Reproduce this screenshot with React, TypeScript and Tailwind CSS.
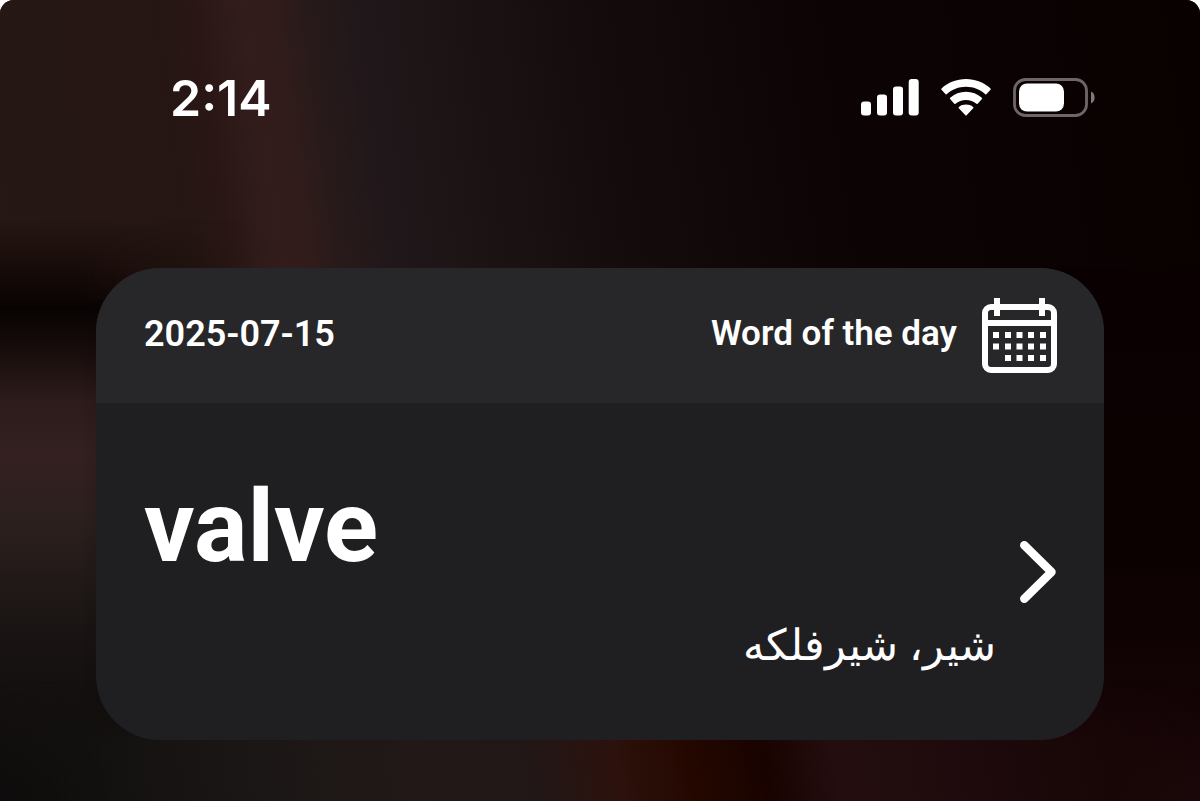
function SignalIcon() {
  return (
    <svg viewBox="0 0 58 38" className="h-[38px] w-[58px]" fill="currentColor" role="img" aria-label="Signal">
      <rect x="0" y="22.5" width="10" height="14" rx="3" />
      <rect x="16" y="15.5" width="10" height="21" rx="3" />
      <rect x="32" y="7.5" width="10" height="29" rx="3" />
      <rect x="47.7" y="0" width="10" height="36.5" rx="3" />
    </svg>
  );
}

function WifiIcon() {
  return (
    <svg viewBox="0 0 50 38" className="h-[38px] w-[50px]" fill="currentColor" role="img" aria-label="Wi-Fi">
      <path d="M25 0C15.700 0 7 3.500.5 9.500c-.4.400-.4.900 0 1.300l3.900 4.300c.4.400.9.400 1.300.1C10.900 10.500 17.700 7.800 25 7.800s14.100 2.700 19.300 7.400c.4.3.9.300 1.300-.1l3.900-4.300c.4-.4.400-.9 0-1.300C43 3.500 34.300 0 25 0Z" />
      <path d="M25 12.700c-6 0-11.500 2.200-15.800 6-.4.400-.4.900-.1 1.300l4.200 4.700c.3.400.8.400 1.200.1 2.900-2.500 6.500-3.900 10.500-3.900s7.600 1.400 10.500 3.900c.4.3.9.300 1.200-.1l4.200-4.700c.3-.4.300-.9-.1-1.300-4.300-3.800-9.800-6-15.800-6Z" />
      <path d="M25 25.600c-2.700 0-5.100.8-7.100 2.400-.4.300-.5.900-.1 1.300l6.600 7c.3.400.9.400 1.200 0l6.600-7c.4-.4.300-1-.1-1.300-2-1.600-4.400-2.400-7.100-2.400Z" />
    </svg>
  );
}

function BatteryIcon() {
  return (
    <svg viewBox="0 0 82 40" className="h-10 w-[82px]" role="img" aria-label="Battery">
      <rect x="1.500" y="1.500" width="72" height="36" rx="11" fill="none" stroke="#6f6767" strokeWidth="2.800" />
      <rect x="6" y="5.500" width="45" height="28" rx="8" fill="currentColor" />
      <path d="M78 13.500c2.400 1 3.600 3.300 3.600 6s-1.200 5-3.600 6Z" fill="#7f7878" />
    </svg>
  );
}

const calendarDots = [
  [11, 34], [23, 34], [34.5, 34], [46, 34], [58, 34],
  [11, 45.5], [23, 45.5], [34.5, 45.5], [46, 45.5], [58, 45.5],
  [23, 57], [34.5, 57], [46, 57], [58, 57],
];

function CalendarIcon() {
  return (
    <svg viewBox="0 0 75 75" className="size-[75px]" fill="currentColor" aria-hidden="true">
      <rect x="3" y="9" width="69" height="63" rx="6" fill="none" stroke="currentColor" strokeWidth="6" />
      <rect x="12" y="0" width="6" height="18" />
      <rect x="57" y="0" width="6" height="18" />
      <rect x="3" y="22" width="69" height="6" />
      {calendarDots.map(([x, y]) => (
        <rect key={`${x}-${y}`} x={x} y={y} width="6" height="6" />
      ))}
    </svg>
  );
}

function ChevronIcon() {
  return (
    <svg viewBox="0 0 36 64" className="h-16 w-9 shrink-0" fill="none" stroke="currentColor" strokeWidth="8.500" strokeLinecap="round" strokeLinejoin="round" aria-hidden="true">
      <path d="M4.300 5.200 31.500 32 4.300 58.800" />
    </svg>
  );
}

function Wallpaper() {
  return (
    <div className="absolute inset-0 -z-10 overflow-hidden rounded-t-[14px] bg-[#0c0203]">
      <div className="absolute inset-x-0 top-0 h-[300px] bg-[linear-gradient(82deg,#261814_0%,#251613_16%,#2a1715_19%,#321d1c_23%,#311c1b_25%,#281a1a_28%,#20171a_32%,#1c1415_38%,#150d0e_48%,#110809_58%,#0d0405_68%,#0b0203_80%,#090000_100%)]" />
      <div className="absolute top-[220px] bottom-0 left-0 w-[320px] bg-[linear-gradient(180deg,transparent_0px,#170b09_50px,#080302_88px,#150b0a_125px,#2d1b1b_180px,#342020_235px,#2c201e_300px,#1f1817_370px,#151110_450px,#0e0c0c_581px)] [mask-image:linear-gradient(90deg,#000_0px,#000_80px,transparent_250px)]" />
      <div className="absolute top-[268px] right-0 bottom-0 w-[200px] bg-[linear-gradient(180deg,#0a0001,#0c0101_55%,#140405_82%,#1c080a)]" />
      <div className="absolute inset-x-0 bottom-0 h-[120px] bg-[linear-gradient(80deg,transparent_0%,#13110f_9%,#1b1716_22%,#211817_34%,#211716_44%,#2c110c_51%,#240800_57%,#190300_63%,#230d0f_69%,#1e0a0c_80%,#180607_91%,transparent_100%)] [mask-image:linear-gradient(180deg,transparent,#000_50%)]" />
    </div>
  );
}

export default function App() {
  return (
    <div className="relative isolate min-h-screen bg-white px-24 pt-[68px] pb-[61px] font-['Roboto',sans-serif] text-white">
      <Wallpaper />
      <header className="flex h-[60px] items-center justify-between pr-[9px] pl-[74px]">
        <time className="font-['Inter',sans-serif] text-[50px] leading-[60px] font-semibold">2:14</time>
        <div className="flex items-center gap-[22px]">
          <SignalIcon />
          <WifiIcon />
          <BatteryIcon />
        </div>
      </header>

      <main className="mt-[140px] overflow-hidden rounded-[64px] bg-[#1f1f21]">
        <div className="flex h-[135px] items-center justify-between bg-[#272729] pr-[47px] pl-12 leading-10 font-semibold">
          <time dateTime="2025-07-15" className="pb-1 text-[36px] leading-10">2025-07-15</time>
          <div className="flex items-center gap-[25px]">
            <h1 className="pb-1 text-[35px] leading-10">Word of the day</h1>
            <CalendarIcon />
          </div>
        </div>
        <a href="#valve" className="flex h-[337px] items-center gap-6 px-12">
          <div className="flex flex-1 flex-col gap-[30px] pt-1">
            <strong className="text-[100px] leading-[112px] font-bold">valve</strong>
            <span lang="fa" dir="rtl" className="text-[43px] leading-[64px] font-normal">شیر، شیرفلکه</span>
          </div>
          <ChevronIcon />
        </a>
      </main>
    </div>
  );
}
